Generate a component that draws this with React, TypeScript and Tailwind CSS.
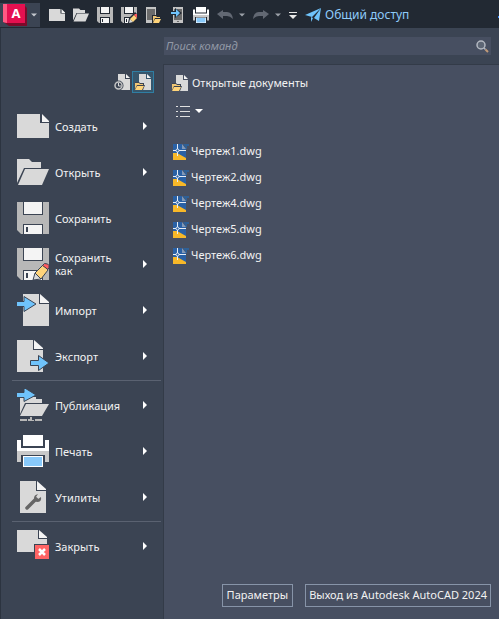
import type { ReactNode } from 'react'

type IconProps = { className?: string }

const docs = ['Чертеж1.dwg', 'Чертеж2.dwg', 'Чертеж4.dwg', 'Чертеж5.dwg', 'Чертеж6.dwg']

function NewIcon({ className = 'size-8' }: IconProps) {
  return (
    <svg viewBox="0 0 32 32" className={className}>
      <path d="M0 4h23v9h9v15H0z" fill="#d9d9d9" />
      <path d="M25 4l7 7v1h-7z" fill="#f4f4f4" />
    </svg>
  )
}

function FolderIcon({ className = 'size-8' }: IconProps) {
  return (
    <svg viewBox="0 0 32 32" className={className}>
      <path d="M0 3h12l3 3h9v6H7L0 27z" fill="#d9d9d9" />
      <path d="M8 13h24l-7 16H1z" fill="#d9d9d9" />
    </svg>
  )
}

function FloppyShape() {
  return (
    <>
      <path d="M0 0h32v32H4l-4-4z" fill="#b8b8b8" />
      <path d="M6 0h20v13H6zM6 22h20v10H6z" fill="#3b4453" />
      <path d="M7 0h18v12H7zM7 23h18v9H7z" fill="#f4f4f4" />
      <path d="M9 25h2v5H9z" fill="#3b4453" />
    </>
  )
}

function SaveIcon({ className = 'size-8' }: IconProps) {
  return (
    <svg viewBox="0 0 32 32" className={className}>
      <FloppyShape />
    </svg>
  )
}

function SaveAsIcon({ className = 'size-8' }: IconProps) {
  return (
    <svg viewBox="0 0 32 32" className={className}>
      <FloppyShape />
      <g stroke="#3b4453">
        <path d="M16 32l2-7 6 6z" fill="#d9d9d9" />
        <path d="M18 25l8-8 5 5-7 9z" fill="#ffd47a" />
        <path d="M25.5 17.5l2-2q4 0 4.500 2 .5 2-1 4z" fill="#ff5b5f" />
      </g>
    </svg>
  )
}

// the title bar version has a chunkier pencil
function SmallSaveIcon({ pencil = false }: { pencil?: boolean }) {
  return (
    <svg viewBox="0 0 16 16" className="size-4">
      <path d="M0 0h16v16H2l-2-2z" fill="#b8b8b8" />
      <path d="M3 0h10v7H3zM3 10h10v6H3z" fill="#222933" />
      <path d="M4 0h8v6H4zM4 11h8v5H4z" fill="#f4f4f4" />
      <path d="M5 12h1v3H5z" fill="#222933" />
      {pencil && (
        <>
          <path d="M7 16l1-5 6-6 3 3v8z" fill="#222933" />
          <path d="M8 16l1-4 3 3z" fill="#d9d9d9" />
          <path d="M9 12l4-4 3 3-4 4z" fill="#ffd47a" />
          <path d="M13 8l1-1h2v4z" fill="#ff5b5f" />
        </>
      )}
    </svg>
  )
}

function ImportIcon() {
  return (
    <svg viewBox="0 0 32 32" className="size-8">
      <path d="M6 0h16v10h10v22H6z" fill="#d9d9d9" />
      <path d="M23 0l9 8v1h-9z" fill="#f4f4f4" />
      <path d="M-1 7.500h8V2.500L19 10 7 17.500v-5h-8z" fill="#6fc3fb" stroke="#3b4453" />
    </svg>
  )
}

function ExportIcon() {
  return (
    <svg viewBox="0 0 32 32" className="size-8">
      <path d="M0 0h16v10h10v22H0z" fill="#d9d9d9" />
      <path d="M17 0l9 8v1h-9z" fill="#f4f4f4" />
      <path d="M13.5 20.500h8v-5L32 23l-10.500 7.500v-5h-8z" fill="#6fc3fb" stroke="#3b4453" />
    </svg>
  )
}

function PublishIcon() {
  return (
    <svg viewBox="0 0 32 32" className="size-8">
      <path d="M3 8h16v2h6v4H8L3 25z" fill="#d9d9d9" />
      <path d="M9 15h23l-7 12H3z" fill="#d9d9d9" />
      <path d="M3 30h7v2H3zM11 30h2v-1h2v2h2v1h-6zM18 30h7v2h-7zM13 28h2v4h-2z" fill="#b8b8b8" />
      <path d="M-1 3.500h8v-5L19 6 7 12.500v-4h-8z" fill="#6fc3fb" stroke="#3b4453" />
    </svg>
  )
}

function PrintIcon({ className = 'size-8' }: IconProps) {
  return (
    <svg viewBox="0 0 32 32" className={className}>
      <path d="M6 0h20v11H6zM0 5h4v8h24V5h4v11H0z" fill="#fff" />
      <path d="M0 16h32v11h-4v-7H4v7H0z" fill="#c9c9c9" />
      <path d="M6 21h20v11H6z" fill="#fff" />
      <path d="M7 22h18v9H7z" fill="#88c9fa" />
    </svg>
  )
}

function UtilitiesIcon() {
  return (
    <svg viewBox="0 0 32 32" className="size-8">
      <path d="M3 0h16v10h10v22H3z" fill="#d9d9d9" />
      <path d="M20 0l9 8v1h-9z" fill="#f4f4f4" />
      <path d="M10 27l9-9" stroke="#666" strokeWidth="3.5" strokeLinecap="round" />
      <path d="M21 13q-4 1-4 4t3 4q5 0 4-5l-3 2-2-2z" fill="#666" />
    </svg>
  )
}

function CloseIcon() {
  return (
    <svg viewBox="0 0 32 32" className="size-8">
      <path d="M0 0h21v9h9v5H17v8H0z" fill="#d9d9d9" />
      <path d="M22 0l8 7v1h-8z" fill="#f4f4f4" />
      <path d="M18 15h14v14H18z" fill="#ff6464" />
      <path d="M22 19l6 6M28 19l-6 6" stroke="#fff" strokeWidth="2.5" />
    </svg>
  )
}

function DeviceOpenIcon() {
  return (
    <svg viewBox="0 0 16 16" className="size-4">
      <path d="M1 0h10v16H1z" fill="#c4c4c4" />
      <path d="M2 2h8v11H2z" fill="#6b6b6b" />
      <path d="M7 8h4l1 1h4v7H7z" fill="#222933" />
      <path d="M8 9h3l1 1h3v1h-5l-2 4z" fill="#f0c674" />
      <path d="M10 12h6l-2 4H8z" fill="#ffd47a" />
    </svg>
  )
}

function DeviceSaveIcon() {
  return (
    <svg viewBox="0 0 16 16" className="size-4">
      <path d="M4 0h10v16H4z" fill="#c4c4c4" />
      <path d="M5 2h8v11H5zM8 14h2v1H8z" fill="#6b6b6b" />
      <path d="M3 4h3V1l7 5-7 5V8H3z" fill="#222933" />
      <path d="M2 5h5V2l4 4-4 4V7H2z" fill="#6fc3fb" />
    </svg>
  )
}

function OpenDocsIcon() {
  return (
    <svg viewBox="0 0 16 16" className="size-4">
      <path d="M4 0h7v5h5v11H4z" fill="#d9d9d9" />
      <path d="M12 0l4 4h-4z" fill="#f4f4f4" />
      <path d="M0 8h4l1 1h4v2h1l-2 5H0z" fill="#3b4453" />
      <path d="M0 9h4l1 1h3v1H2l-2 4z" fill="#f0c674" />
      <path d="M2 12h7l-2 4H0z" fill="#ffd47a" />
    </svg>
  )
}

function RecentDocsIcon() {
  return (
    <svg viewBox="0 0 16 16" className="size-4">
      <path d="M4 0h7v5h5v11H4z" fill="#d9d9d9" />
      <path d="M12 0l4 4h-4z" fill="#f4f4f4" />
      <circle cx="4.5" cy="11.5" r="5" fill="#3b4453" />
      <circle cx="4.5" cy="11.5" r="3.5" fill="#3b4453" stroke="#c4c4c4" strokeWidth="1.5" />
      <path d="M4.5 9v3H7" fill="none" stroke="#d9d9d9" />
    </svg>
  )
}

function DwgIcon() {
  return (
    <svg viewBox="0 0 16 16" className="size-4">
      <path d="M0 0h9v5h4v11H0z" fill="#2a61a5" />
      <path d="M10 0h6v2h-2v3h-1z" fill="#2f6096" />
      <path d="M9 0l4 5H9z" fill="#8299b8" />
      <path d="M0 9h4l9 5v2H0z" fill="#f8b828" />
      <path d="M4.500 0v5M4.500 8v4M0 6.500h3M6 6.500h7" stroke="#e8eef6" />
      <circle cx="4.5" cy="6.5" r="1.5" fill="#2a61a5" stroke="#e8eef6" />
    </svg>
  )
}

function UndoIcon({ className = '' }: IconProps) {
  return (
    <svg viewBox="0 0 16 10" className={`h-2.5 w-4 ${className}`}>
      <path d="M0 4l6-4v2h4q5 0 6 7-3-3-6-3H6v3z" fill="#626873" />
    </svg>
  )
}

function Caret({ className = 'w-2 text-white' }: IconProps) {
  return (
    <svg viewBox="0 0 8 4" className={`h-1 ${className}`}>
      <path d="M0 0h8L4 4z" fill="currentColor" />
    </svg>
  )
}

function MenuItem({ icon, label, submenu = true }: { icon: ReactNode; label: ReactNode; submenu?: boolean }) {
  return (
    <button className="flex h-[46px] w-full items-center gap-1.5 px-4 text-left hover:bg-white/5">
      {icon}
      <span className="flex-1 leading-[13px]">{label}</span>
      {submenu && (
        <svg viewBox="0 0 4 8" className="h-2 w-1">
          <path d="M0 0l4 4-4 4z" fill="#fff" />
        </svg>
      )}
    </button>
  )
}

function ToolButton({ label, children }: { label: string; children: ReactNode }) {
  return (
    <button aria-label={label} className="flex items-center">
      {children}
    </button>
  )
}

export default function App() {
  return (
    <div className="flex min-h-screen flex-col bg-[#3b4453] font-['Noto_Sans',sans-serif] text-[11px] text-[#f2f2f2]">
      <header className="flex h-7 items-center bg-[#222933] pt-0.5">
        <button aria-label="Меню приложения" className="flex h-6 w-10 items-center gap-1 bg-[#3b4453] pl-[3px]">
          <svg viewBox="0 0 24 22" className="h-[22px] w-6">
            <path d="M2 19h20V2l2 2v18H6z" fill="#7c0a2a" />
            <path d="M0 0h22v19H3L0 18z" fill="#e51050" />
            <path d="M0 0h4v19l-4-1z" fill="#ff5a83" />
            <text x="13" y="14" textAnchor="middle" fontSize="13" fontWeight="700" fill="#fff">A</text>
          </svg>
          <Caret className="w-1.5 text-[#c4c8ce]" />
        </button>
        <div className="ml-[9px] flex items-center gap-2">
          <ToolButton label="Создать"><NewIcon className="size-4" /></ToolButton>
          <ToolButton label="Открыть"><FolderIcon className="size-4" /></ToolButton>
          <ToolButton label="Сохранить"><SmallSaveIcon /></ToolButton>
          <ToolButton label="Сохранить как"><SmallSaveIcon pencil /></ToolButton>
          <ToolButton label="Открыть с устройства"><DeviceOpenIcon /></ToolButton>
          <ToolButton label="Сохранить на устройство"><DeviceSaveIcon /></ToolButton>
          <ToolButton label="Печать"><PrintIcon className="size-4" /></ToolButton>
          <ToolButton label="Отменить"><UndoIcon /></ToolButton>
        </div>
        <Caret className="ml-1.5 w-1.5 text-[#9ba0a8]" />
        <div className="ml-2 flex items-center gap-1.5">
          <ToolButton label="Повторить"><UndoIcon className="-scale-x-100" /></ToolButton>
          <Caret className="w-1.5 text-[#9ba0a8]" />
        </div>
        <button aria-label="Настройка панели" className="ml-2">
          <svg viewBox="0 0 8 7" className="h-[7px] w-2">
            <path d="M0 0h8v1H0zM0 3h8L4 7z" fill="#e8e8e8" />
          </svg>
        </button>
        <button className="ml-2 flex items-center gap-1 text-[12px] text-[#8ecbfa]">
          <svg viewBox="0 0 16 16" className="size-4">
            <path d="M0 8l16-7-9 9zM16 1l-2 13-5-3zM6 10l2 1-2 4z" fill="#6fc3fb" />
          </svg>
          Общий доступ
        </button>
        <span className="mt-1 ml-auto h-0.5 w-px bg-[#3f8cff]" />
      </header>

      <div className="flex flex-1 border-l border-[#2c3440]">
        <nav className="w-[162px] shrink-0 pt-[43px]">
          <div className="flex h-8 justify-end pr-[9px]">
            <button aria-label="Последние документы" className="flex size-[22px] items-center justify-center pl-0.5">
              <RecentDocsIcon />
            </button>
            <button aria-label="Открытые документы" className="flex size-[22px] items-center justify-center border border-[#2f7ea3] bg-[#36566c]">
              <OpenDocsIcon />
            </button>
          </div>
          <MenuItem icon={<NewIcon />} label="Создать" />
          <MenuItem icon={<FolderIcon />} label="Открыть" />
          <MenuItem icon={<SaveIcon />} label="Сохранить" submenu={false} />
          <MenuItem icon={<SaveAsIcon />} label={<>Сохранить<br />как</>} />
          <MenuItem icon={<ImportIcon />} label="Импорт" />
          <MenuItem icon={<ExportIcon />} label="Экспорт" />
          <hr className="my-px mr-0.5 ml-[11px] border-t border-[#5a6271]" />
          <MenuItem icon={<PublishIcon />} label="Публикация" />
          <MenuItem icon={<PrintIcon />} label="Печать" />
          <MenuItem icon={<UtilitiesIcon />} label="Утилиты" />
          <hr className="my-px mr-0.5 ml-[11px] border-t border-[#5a6271]" />
          <MenuItem icon={<CloseIcon />} label="Закрыть" />
        </nav>

        <main className="flex flex-1 flex-col">
          <div className="mt-[9px] mr-2 ml-px flex h-[18px] items-center bg-[#474f61] px-0.5">
            <input
              aria-label="Поиск команд"
              placeholder="Поиск команд"
              className="min-w-0 flex-1 bg-transparent italic outline-none placeholder:text-[#9299a6]"
            />
            <svg viewBox="0 0 13 13" className="size-[13px]">
              <circle cx="5" cy="5" r="4" fill="#5d6675" stroke="#b4b9c2" strokeWidth="1.5" />
              <path d="M8 8l1.5 1.5" stroke="#b4b9c2" strokeWidth="1.5" />
              <path d="M9.5 9.5L12 12" stroke="#c09a78" strokeWidth="2" />
            </svg>
          </div>
          <section className="mt-[9px] flex flex-1 flex-col border-t border-l border-[#333b48] bg-[#474f61]">
            <h1 className="mt-2.5 ml-2 flex items-center gap-1">
              <OpenDocsIcon />
              Открытые документы
            </h1>
            <button aria-label="Вид списка" className="mt-3.5 ml-3 flex items-center gap-[5px] self-start">
              <svg viewBox="0 0 14 11" className="h-[11px] w-3.5">
                <path d="M0 0h2v1H0zM4 0h10v1H4zM0 5h2v1H0zM4 5h10v1H4zM0 10h2v1H0zM4 10h10v1H4z" fill="#e0e0e0" />
              </svg>
              <Caret />
            </button>
            <ul className="mt-[22px] ml-[9px]">
              {docs.map((name) => (
                <li key={name}>
                  <a href="#" className="flex h-[26px] items-center gap-0.5">
                    <DwgIcon />
                    {name}
                  </a>
                </li>
              ))}
            </ul>
            <div className="mt-auto mr-2 mb-3 flex justify-end gap-3">
              <button className="h-[23px] border border-[#8794a8] px-1">Параметры</button>
              <button className="h-[23px] border border-[#8794a8] px-[3px]">Выход из Autodesk AutoCAD 2024</button>
            </div>
          </section>
        </main>
      </div>
    </div>
  )
}
